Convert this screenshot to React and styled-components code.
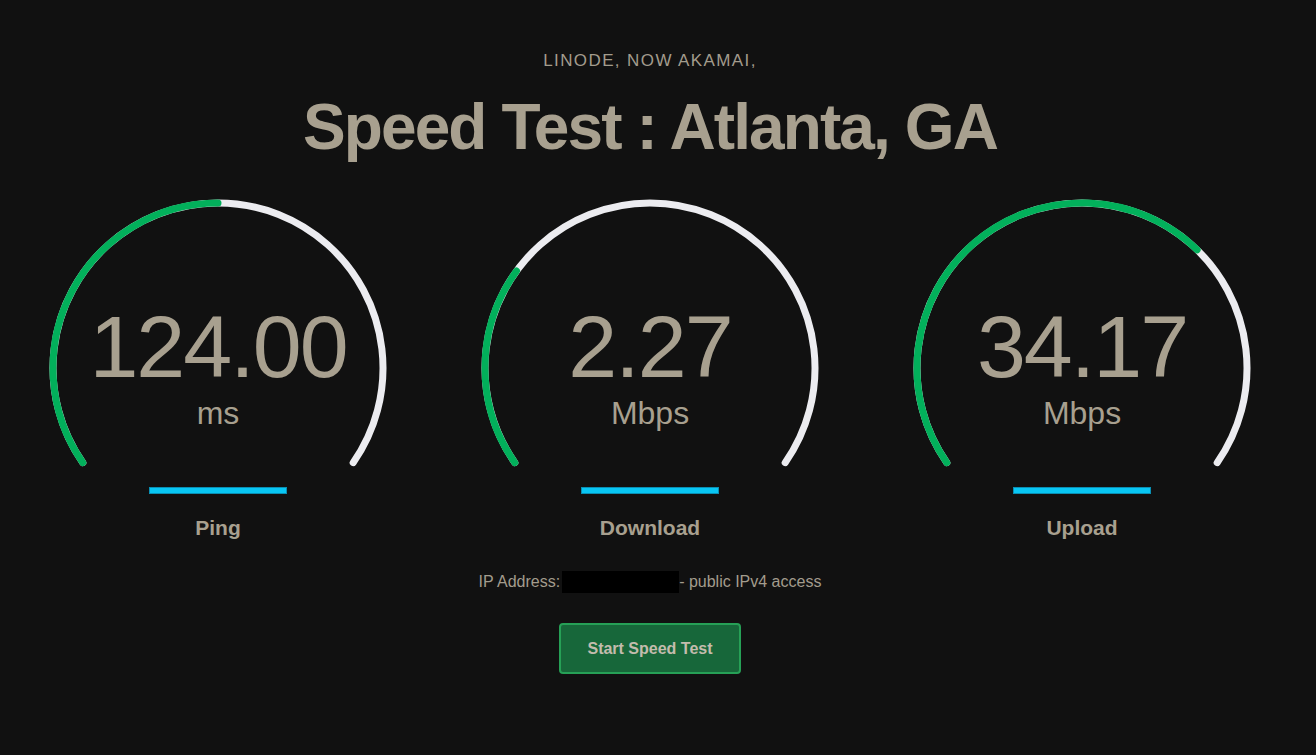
import React from "react";
import styled, { createGlobalStyle } from "styled-components";

const GlobalStyle = createGlobalStyle`
  html, body {
    margin: 0;
    padding: 0;
    background: #111111;
  }
  body {
    font-family: "Liberation Sans", Arial, Helvetica, sans-serif;
    color: #a8a08f;
  }
`;

const Page = styled.main`
  width: 1300px;
  min-height: 755px;
  display: flex;
  flex-direction: column;
  align-items: center;
  padding-top: 51px;
  box-sizing: border-box;
`;

const Eyebrow = styled.div`
  font-size: 17px;
  line-height: 20px;
  letter-spacing: 1.4px;
  text-transform: uppercase;
  color: #a39c8d;
`;

const Title = styled.h1`
  margin: 24px 0 0;
  font-size: 64px;
  line-height: 64px;
  font-weight: 700;
  letter-spacing: -1.9px;
  color: #a8a08f;
`;

const Gauges = styled.section`
  margin-top: 39px;
  display: grid;
  grid-template-columns: repeat(3, 432px);
  justify-content: center;
  width: 100%;
`;

const GaugeColumn = styled.div`
  display: flex;
  flex-direction: column;
  align-items: center;
`;

const Dial = styled.div`
  display: grid;
  width: 340px;
  height: 270px;
  & > * {
    grid-area: 1 / 1;
  }
`;

const Readout = styled.div`
  display: flex;
  flex-direction: column;
  align-items: center;
  padding-top: 105px;
`;

const Value = styled.div`
  font-size: 88px;
  line-height: 88px;
  font-weight: 400;
  letter-spacing: -2px;
  color: #a8a08f;
`;

const Unit = styled.div`
  margin-top: 7px;
  font-size: 32px;
  line-height: 31px;
  color: #a8a08f;
`;

const Bar = styled.div`
  margin-top: 19px;
  width: 138px;
  height: 7px;
  box-sizing: border-box;
  background: #08c6f4;
  border: 1px solid #0a8fb3;
`;

const Label = styled.div`
  margin-top: 23px;
  font-size: 21px;
  line-height: 21px;
  font-weight: 700;
  color: #a8a08f;
`;

const IpLine = styled.div`
  margin-top: 33px;
  display: flex;
  align-items: center;
  font-size: 16px;
  line-height: 22px;
  color: #a39c8d;
`;

const Redacted = styled.span`
  display: inline-block;
  width: 117px;
  height: 22px;
  margin-left: 2px;
  background: #000;
`;

const StartButton = styled.button`
  margin-top: 30px;
  width: 182px;
  height: 51px;
  background: #17673a;
  border: 2px solid #26a056;
  border-radius: 4px;
  color: #c3bcad;
  font-family: "Liberation Sans", Arial, sans-serif;
  font-size: 16px;
  font-weight: 700;
  cursor: pointer;
`;

const CX = 170;
const CY = 170;
const R = 165;
const START = -125;
const END = 125;

function pt(angle) {
  const a = (angle * Math.PI) / 180;
  return [CX + R * Math.sin(a), CY - R * Math.cos(a)];
}

function arc(from, to) {
  const [x1, y1] = pt(from);
  const [x2, y2] = pt(to);
  const large = to - from > 180 ? 1 : 0;
  return `M ${x1.toFixed(2)} ${y1.toFixed(2)} A ${R} ${R} 0 ${large} 1 ${x2.toFixed(2)} ${y2.toFixed(2)}`;
}

function GaugeArc({ fraction }) {
  const mid = START + (END - START) * fraction;
  return (
    <svg width="340" height="270" viewBox="0 0 340 270">
      <path d={arc(START, END)} fill="none" stroke="#ececf0" strokeWidth="7" strokeLinecap="round" />
      <path d={arc(START, mid)} fill="none" stroke="#02b05b" strokeWidth="7" strokeLinecap="round" />
    </svg>
  );
}

const gauges = [
  { value: "124.00", unit: "ms", label: "Ping", fraction: 0.5 },
  { value: "2.27", unit: "Mbps", label: "Download", fraction: 0.284 },
  { value: "34.17", unit: "Mbps", label: "Upload", fraction: 0.677 },
];

export default function App() {
  return (
    <>
      <GlobalStyle />
      <Page>
        <Eyebrow>Linode, now Akamai,</Eyebrow>
        <Title>Speed Test : Atlanta, GA</Title>
        <Gauges>
          {gauges.map((g) => (
            <GaugeColumn key={g.label}>
              <Dial>
                <GaugeArc fraction={g.fraction} />
                <Readout>
                  <Value>{g.value}</Value>
                  <Unit>{g.unit}</Unit>
                </Readout>
              </Dial>
              <Bar />
              <Label>{g.label}</Label>
            </GaugeColumn>
          ))}
        </Gauges>
        <IpLine>
          IP Address:<Redacted />- public IPv4 access
        </IpLine>
        <StartButton>Start Speed Test</StartButton>
      </Page>
    </>
  );
}
